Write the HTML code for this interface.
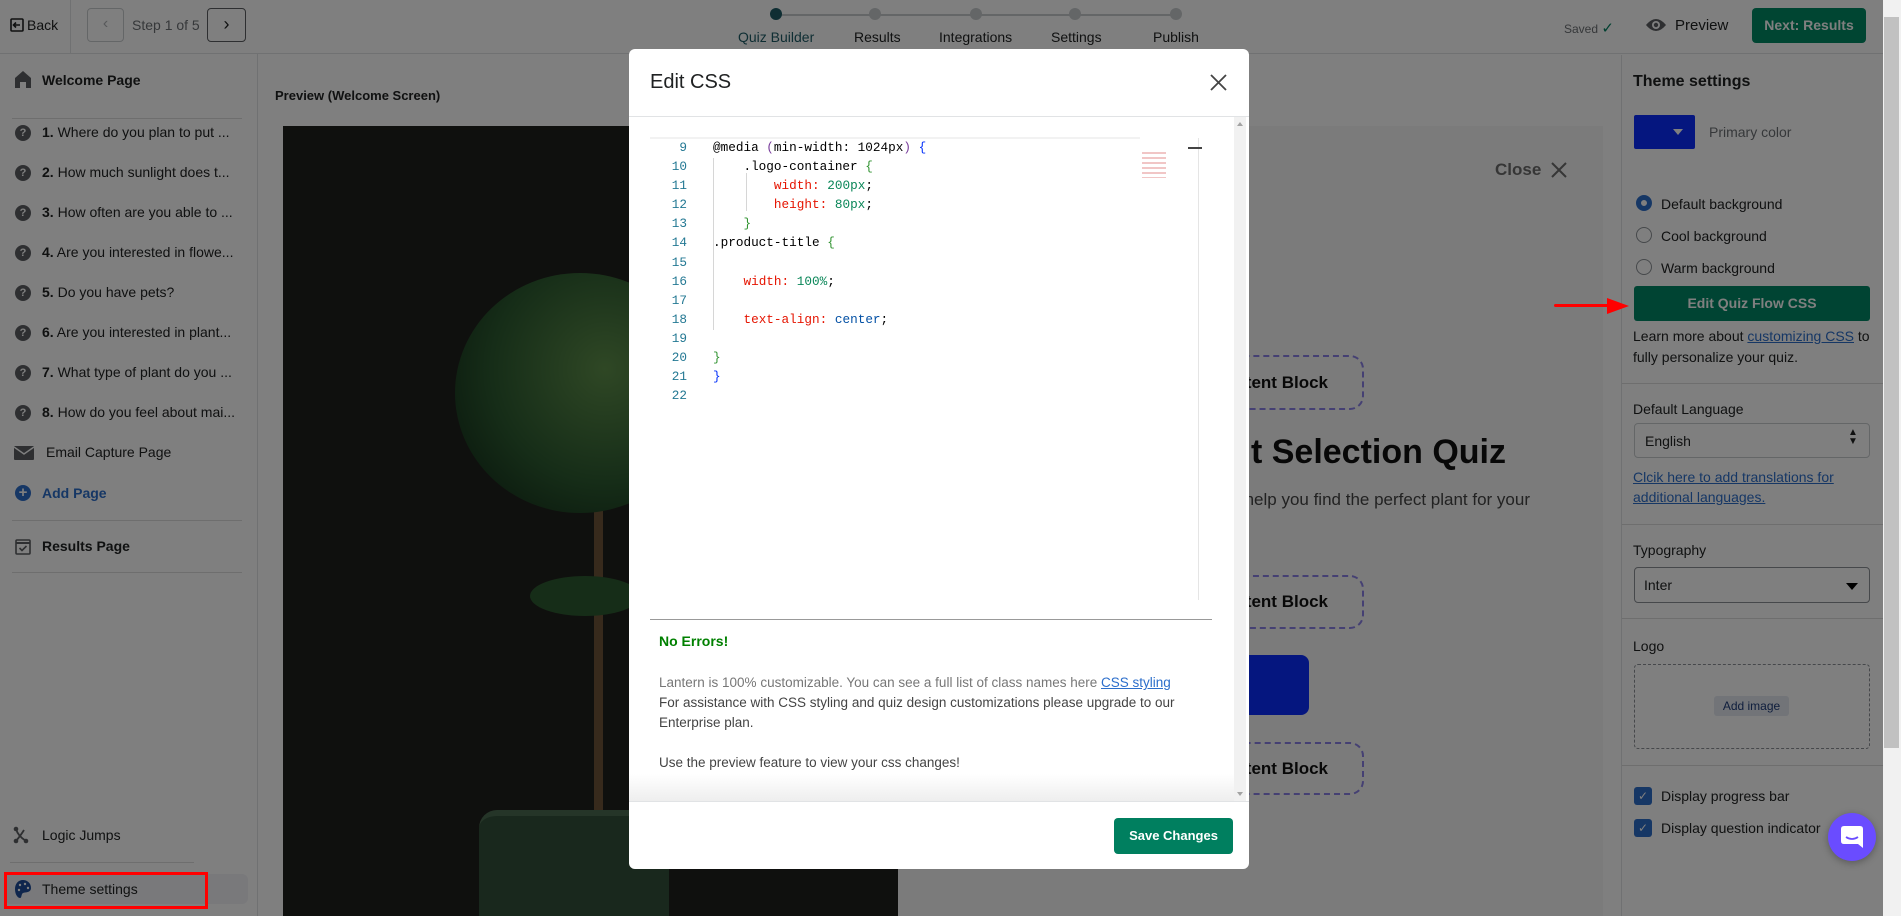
<!DOCTYPE html>
<html><head><meta charset="utf-8"><style>
*{box-sizing:border-box;margin:0;padding:0}
body{width:1901px;height:916px;overflow:hidden;position:relative;font-family:"Liberation Sans",sans-serif;background:#fff;color:#202223}
.a{position:absolute}
.t{position:absolute;white-space:nowrap}
.side .t{font-size:14px;color:#202223}
.qi{position:absolute;left:15px;width:16px;height:16px;border-radius:50%;background:#5c5f62;color:#fff;font-size:11px;font-weight:bold;text-align:center;line-height:16px}
.hr{position:absolute;height:1px;background:#dcdcdc}
.code{font-family:"Liberation Mono",monospace;font-size:12.7px;position:absolute;white-space:pre;line-height:19.1px}
.ln{color:#237893;text-align:right;width:40px}
.p{color:#e51400}.n{color:#098658}.b{color:#0431fa}.k{color:#0451a5}
.cb{position:absolute;border:2px dashed #8a80e6;border-radius:14px;font-weight:bold;font-size:17px;color:#111;text-align:right;padding-right:34px}
.rad{position:absolute;left:1636px;width:16px;height:16px;border-radius:50%;border:1.5px solid #8c9196;background:#fff}
.rp .t{font-size:14px;color:#202223}
.chk{position:absolute;left:1634px;width:18px;height:18px;border-radius:3px;background:#2c6ecb;color:#fff;font-size:12px;text-align:center;line-height:18px}
</style></head><body>
<!-- header -->
<div class="a" style="left:0;top:0;width:1901px;height:54px;background:#fff;border-bottom:1px solid #e1e3e5"></div>
<svg class="a" style="left:10px;top:18px" width="14" height="14" viewBox="0 0 14 14"><rect x="1" y="1" width="12" height="12" rx="1" fill="none" stroke="#202223" stroke-width="1.6"/><path d="M10 7H4M6 4.5 3.5 7 6 9.5" stroke="#202223" stroke-width="1.6" fill="none"/></svg>
<div class="t" style="left:27px;top:17px;font-size:14px">Back</div>
<div class="a" style="left:70px;top:0;width:1px;height:54px;background:#e1e3e5"></div>
<div class="a" style="left:87px;top:8px;width:37px;height:34px;border:1px solid #c9cccf;border-radius:4px;color:#b0b3b6;text-align:center;line-height:30px;font-size:16px">&#x2039;</div>
<div class="t" style="left:132px;top:17px;font-size:14px;color:#6d7175">Step 1 of 5</div>
<div class="a" style="left:207px;top:8px;width:39px;height:34px;border:1px solid #5c5f62;border-radius:4px;color:#202223;text-align:center;line-height:30px;font-size:18px">&#x203A;</div>
<div class="a" style="left:776px;top:14px;width:400px;height:2px;background:#c9cccf"></div>
<div class="a" style="left:770px;top:8px;width:12px;height:12px;border-radius:50%;background:#1e5c67"></div>
<div class="a" style="left:869px;top:8px;width:12px;height:12px;border-radius:50%;background:#c9cccf"></div>
<div class="a" style="left:970px;top:8px;width:12px;height:12px;border-radius:50%;background:#c9cccf"></div>
<div class="a" style="left:1069px;top:8px;width:12px;height:12px;border-radius:50%;background:#c9cccf"></div>
<div class="a" style="left:1170px;top:8px;width:12px;height:12px;border-radius:50%;background:#c9cccf"></div>
<div class="t" style="left:738px;top:29px;font-size:14px;color:#1e5c67">Quiz Builder</div>
<div class="t" style="left:854px;top:29px;font-size:14px">Results</div>
<div class="t" style="left:939px;top:29px;font-size:14px">Integrations</div>
<div class="t" style="left:1051px;top:29px;font-size:14px">Settings</div>
<div class="t" style="left:1153px;top:29px;font-size:14px">Publish</div>
<div class="t" style="left:1564px;top:19px;font-size:12px;color:#6d7175">Saved <span style="color:#008060;font-size:15px">&#10003;</span></div>
<svg class="a" style="left:1645px;top:17px" width="22" height="16" viewBox="0 0 22 16"><path d="M1 8Q11 -4 21 8Q11 20 1 8Z" fill="#5c5f62"/><circle cx="11" cy="8" r="4" fill="#fff"/><circle cx="11" cy="8" r="2.2" fill="#5c5f62"/></svg>
<div class="t" style="left:1675px;top:17px;font-size:15px">Preview</div>
<div class="a" style="left:1752px;top:8px;width:114px;height:35px;background:#008a64;border-radius:4px;color:#fff;font-weight:bold;font-size:14px;text-align:center;line-height:35px">Next: Results</div>

<!-- sidebar -->
<div class="side">
<div class="a" style="left:257px;top:54px;width:1px;height:862px;background:#e1e3e5"></div>
<svg class="a" style="left:15px;top:71px" width="16" height="17" viewBox="0 0 16 17"><path d="M8 0 16 7V17H11V11H5V17H0V7Z" fill="#5c5f62"/></svg>
<div class="t" style="left:42px;top:72px;font-weight:bold">Welcome Page</div>
<div class="hr" style="left:12px;top:118px;width:230px"></div>
<div class="qi" style="top:125px">?</div><div class="t" style="left:42px;top:124px"><b>1.</b> Where do you plan to put ...</div>
<div class="qi" style="top:165px">?</div><div class="t" style="left:42px;top:164px"><b>2.</b> How much sunlight does t...</div>
<div class="qi" style="top:205px">?</div><div class="t" style="left:42px;top:204px"><b>3.</b> How often are you able to ...</div>
<div class="qi" style="top:245px">?</div><div class="t" style="left:42px;top:244px"><b>4.</b> Are you interested in flowe...</div>
<div class="qi" style="top:285px">?</div><div class="t" style="left:42px;top:284px"><b>5.</b> Do you have pets?</div>
<div class="qi" style="top:325px">?</div><div class="t" style="left:42px;top:324px"><b>6.</b> Are you interested in plant...</div>
<div class="qi" style="top:365px">?</div><div class="t" style="left:42px;top:364px"><b>7.</b> What type of plant do you ...</div>
<div class="qi" style="top:405px">?</div><div class="t" style="left:42px;top:404px"><b>8.</b> How do you feel about mai...</div>
<svg class="a" style="left:14px;top:446px" width="20" height="14" viewBox="0 0 20 14"><rect width="20" height="14" rx="1" fill="#5c5f62"/><path d="M0 1 10 8 20 1" stroke="#fff" stroke-width="1.5" fill="none"/></svg>
<div class="t" style="left:46px;top:444px">Email Capture Page</div>
<div class="a" style="left:15px;top:485px;width:16px;height:16px;border-radius:50%;background:#2c6ecb;color:#fff;font-weight:bold;font-size:15px;text-align:center;line-height:16px">+</div>
<div class="t" style="left:42px;top:485px;font-weight:bold"><span style="color:#2c6ecb">Add Page</span></div>
<div class="hr" style="left:12px;top:520px;width:230px"></div>
<svg class="a" style="left:15px;top:538px" width="16" height="17" viewBox="0 0 16 17"><rect x="1" y="2" width="14" height="14" rx="1" fill="none" stroke="#5c5f62" stroke-width="1.6"/><path d="M1 5H15" stroke="#5c5f62" stroke-width="2"/><path d="M4.5 10 7 12.5 11.5 8" stroke="#5c5f62" stroke-width="1.6" fill="none"/></svg>
<div class="t" style="left:42px;top:538px;font-weight:bold">Results Page</div>
<div class="hr" style="left:12px;top:572px;width:230px"></div>
<svg class="a" style="left:13px;top:826px" width="16" height="18" viewBox="0 0 16 18"><circle cx="3" cy="3" r="2.3" fill="#5c5f62"/><circle cx="3" cy="15" r="2.3" fill="#5c5f62"/><circle cx="13" cy="15" r="2.3" fill="#5c5f62"/><path d="M3 3Q5 10 13 15M11 4Q8 9 3 15" stroke="#5c5f62" stroke-width="1.8" fill="none"/></svg>
<div class="t" style="left:42px;top:827px">Logic Jumps</div>
<div class="hr" style="left:10px;top:862px;width:184px"></div>
<div class="a" style="left:5px;top:874px;width:243px;height:30px;background:#f2f3f6;border-radius:6px"></div>
<svg class="a" style="left:15px;top:880px" width="16" height="18" viewBox="0 0 16 18"><path d="M8 0C3 0 0 4 0 9C0 15 3 18 5 18C7 18 6 14 8 13C10 12 16 13 16 8C16 3 12 0 8 0Z" fill="#1e4d9a"/><circle cx="5" cy="5" r="1.2" fill="#fff"/><circle cx="10" cy="4" r="1.2" fill="#fff"/><circle cx="13" cy="8" r="1.2" fill="#fff"/><circle cx="4" cy="10" r="1.2" fill="#fff"/></svg>
<div class="t" style="left:42px;top:881px">Theme settings</div>
</div>

<!-- preview area -->
<div class="a" style="left:258px;top:55px;width:1364px;height:861px;background:#fff"></div>
<div class="t" style="left:275px;top:88px;font-size:13px;font-weight:bold">Preview (Welcome Screen)</div>
<div class="a" style="left:283px;top:126px;width:1320px;height:790px;background:#f6f6f6"></div>
<div class="a" style="left:283px;top:126px;width:615px;height:790px;background:#1f201c;overflow:hidden">
  <div class="a" style="left:311px;top:370px;width:9px;height:420px;background:#6e5438"></div>
  <div class="a" style="left:172px;top:147px;width:250px;height:240px;border-radius:50%;background:radial-gradient(circle at 60% 40%,#5e8f4a,#2c5a30 55%,#1a3a20 80%)"></div>
  <div class="a" style="left:247px;top:450px;width:110px;height:40px;border-radius:50%;background:#2d5a30"></div>
  <div class="a" style="left:196px;top:684px;width:190px;height:130px;border-radius:18px 18px 0 0;background:#33503a;border-top:6px solid #4b6b50"></div>
</div>
<div class="t" style="left:1495px;top:160px;font-size:17px;font-weight:bold;color:#6d6d6d">Close</div>
<svg class="a" style="left:1550px;top:161px" width="18" height="18" viewBox="0 0 18 18"><path d="M2 2 16 16M16 2 2 16" stroke="#6d6d6d" stroke-width="2"/></svg>
<div class="cb" style="left:1120px;top:355px;width:244px;height:55px;line-height:51px">Content Block</div>
<div class="t" style="left:1100px;top:433px;width:406px;text-align:right;font-size:34px;font-weight:bold;color:#111">Plant Selection Quiz</div>
<div class="t" style="left:1100px;top:490px;width:430px;text-align:right;font-size:17px;color:#444">We'll help you find the perfect plant for your</div>
<div class="cb" style="left:1120px;top:575px;width:244px;height:54px;line-height:50px">Content Block</div>
<div class="a" style="left:1150px;top:655px;width:159px;height:60px;background:#0a2cff;border-radius:8px"></div>
<div class="cb" style="left:1120px;top:742px;width:244px;height:53px;line-height:49px">Content Block</div>

<!-- right panel -->
<div class="rp">
<div class="a" style="left:1621px;top:55px;width:1px;height:861px;background:#e1e3e5"></div>
<div class="t" style="left:1633px;top:73px;font-size:16px;font-weight:bold">Theme settings</div>
<div class="a" style="left:1634px;top:115px;width:61px;height:34px;background:#0a2cff;border-radius:2px"></div>
<div class="a" style="left:1673px;top:129px;border-left:5px solid transparent;border-right:5px solid transparent;border-top:6px solid #fff"></div>
<div class="t" style="left:1709px;top:124px;color:#6d7175">Primary color</div>
<div class="rad" style="top:195px;border:5px solid #2c6ecb;background:#fff"></div>
<div class="t" style="left:1661px;top:196px">Default background</div>
<div class="rad" style="top:227px"></div><div class="t" style="left:1661px;top:228px">Cool background</div>
<div class="rad" style="top:259px"></div><div class="t" style="left:1661px;top:260px">Warm background</div>
<div class="a" style="left:1634px;top:286px;width:236px;height:35px;background:#008866;border-radius:3px;color:#fff;font-weight:bold;font-size:14px;text-align:center;line-height:35px">Edit Quiz Flow CSS</div>
<div class="t" style="left:1633px;top:328px">Learn more about <u style="color:#2c6ecb">customizing CSS</u> to</div>
<div class="t" style="left:1633px;top:349px">fully personalize your quiz.</div>
<div class="hr" style="left:1622px;top:383px;width:261px"></div>
<div class="t" style="left:1633px;top:401px">Default Language</div>
<div class="a" style="left:1634px;top:423px;width:236px;height:35px;border:1px solid #c9cccf;border-radius:4px;background:#fff"></div>
<div class="t" style="left:1645px;top:433px">English</div>
<div class="t" style="left:1848px;top:428px;font-size:10px;line-height:9px">&#9650;<br>&#9660;</div>
<div class="t" style="left:1633px;top:469px"><u style="color:#2c6ecb">Clcik here to add translations for</u></div>
<div class="t" style="left:1633px;top:489px"><u style="color:#2c6ecb">additional languages.</u></div>
<div class="hr" style="left:1622px;top:524px;width:261px"></div>
<div class="t" style="left:1633px;top:542px">Typography</div>
<div class="a" style="left:1634px;top:567px;width:236px;height:36px;border:1px solid #8c9196;border-radius:4px;background:#fff"></div>
<div class="t" style="left:1644px;top:577px">Inter</div>
<div class="a" style="left:1846px;top:583px;border-left:6px solid transparent;border-right:6px solid transparent;border-top:7px solid #000"></div>
<div class="hr" style="left:1622px;top:618px;width:261px"></div>
<div class="t" style="left:1633px;top:638px">Logo</div>
<div class="a" style="left:1634px;top:664px;width:236px;height:85px;border:1px dashed #8c9196;border-radius:4px"></div>
<div class="a" style="left:1714px;top:696px;width:75px;height:20px;background:#e4e8f0;border-radius:3px;color:#1f3d7a;font-size:12px;text-align:center;line-height:20px">Add image</div>
<div class="hr" style="left:1622px;top:765px;width:261px"></div>
<div class="chk" style="top:787px">&#10003;</div><div class="t" style="left:1661px;top:788px">Display progress bar</div>
<div class="chk" style="top:819px">&#10003;</div><div class="t" style="left:1661px;top:820px">Display question indicator</div>
</div>

<!-- overlay -->
<div class="a" style="left:0;top:0;width:1901px;height:916px;background:rgba(0,0,0,0.5)"></div>

<!-- page scrollbar -->
<div class="a" style="left:1883px;top:0;width:18px;height:916px;background:#f1f1f1"></div>
<div class="a" style="left:1884px;top:17px;width:15px;height:731px;background:#c1c1c1"></div>

<!-- annotations -->
<div class="a" style="left:4px;top:872px;width:204px;height:37px;border:3px solid #ff0000"></div>
<div class="a" style="left:1554px;top:304px;width:55px;height:3px;background:#ff0000;border-radius:2px"></div>
<div class="a" style="left:1607px;top:298px;border-top:8px solid transparent;border-bottom:8px solid transparent;border-left:22px solid #ff0000"></div>

<!-- chat bubble -->
<div class="a" style="left:1828px;top:813px;width:48px;height:48px;border-radius:50%;background:#6a4cff;box-shadow:0 2px 8px rgba(0,0,0,.3)"></div>
<svg class="a" style="left:1841px;top:826px" width="22" height="22" viewBox="0 0 22 22"><path d="M3 0H19Q22 0 22 3V22L17 18H3Q0 18 0 15V3Q0 0 3 0Z" fill="#fff"/><path d="M5 11Q11 15 17 11" stroke="#6a4cff" stroke-width="1.8" fill="none"/></svg>

<!-- modal -->
<div class="a" style="left:629px;top:49px;width:620px;height:820px;background:#fff;border-radius:6px;overflow:hidden">
  <div class="t" style="left:21px;top:22px;font-size:20px;color:#202223">Edit CSS</div>
  <svg class="a" style="left:581px;top:25px" width="17" height="17" viewBox="0 0 17 17"><path d="M1 1 16 16M16 1 1 16" stroke="#444" stroke-width="1.8"/></svg>
  <div class="a" style="left:0;top:67px;width:620px;height:1px;background:#e1e3e5"></div>
  <div class="a" style="left:605px;top:68px;width:12px;height:684px;background:#f1f1f1"></div>
  <div class="a" style="left:608px;top:73px;border-left:3px solid transparent;border-right:3px solid transparent;border-bottom:4px solid #a3a3a3"></div>
  <div class="a" style="left:608px;top:743px;border-left:3px solid transparent;border-right:3px solid transparent;border-top:4px solid #a3a3a3"></div>
  <div class="a" style="left:21px;top:88px;width:490px;height:2px;background:#f2f2f2"></div>
  <div class="a" style="left:569px;top:89px;width:1px;height:462px;background:#e5e5e5"></div>
  <div class="a" style="left:559px;top:98px;width:14px;height:2px;background:#444"></div>
  <div class="a" style="left:513px;top:103px;width:24px;height:26px;background:repeating-linear-gradient(#e8a0a0 0 2px,transparent 2px 5px);opacity:.6"></div>
  <div class="a" style="left:84px;top:109px;width:1px;height:76px;background:#d6d6d6"></div>
  <div class="a" style="left:117px;top:124px;width:1px;height:38px;background:#d6d6d6"></div>
  <div class="a" style="left:84px;top:166px;width:1px;height:115px;background:#d6d6d6"></div>
  <div class="code ln" style="left:18px;top:89px">9
10
11
12
13
14
15
16
17
18
19
20
21
22</div>
  <div class="code" style="left:84px;top:89px;color:#000">@media <span style="color:#7a3e9d">(</span>min-width: 1024px<span style="color:#7a3e9d">)</span> <span class="b">{</span>
    .logo-container <span style="color:#319331">{</span>
        <span class="p">width:</span> <span class="n">200px</span>;
        <span class="p">height:</span> <span class="n">80px</span>;
    <span style="color:#319331">}</span>
.product-title <span style="color:#319331">{</span>

    <span class="p">width:</span> <span class="n">100%</span>;

    <span class="p">text-align:</span> <span class="k">center</span>;

<span style="color:#319331">}</span>
<span class="b">}</span>
</div>
  <div class="a" style="left:21px;top:570px;width:562px;height:1px;background:#999"></div>
  <div class="t" style="left:30px;top:584px;font-size:14px;font-weight:bold;color:#008000">No Errors!</div>
  <div class="t" style="left:30px;top:624px;font-size:13.5px;color:#777;line-height:20px">Lantern is 100% customizable. You can see a full list of class names here <u style="color:#2c6ecb">CSS styling</u></div>
  <div class="t" style="left:30px;top:644px;font-size:13.5px;color:#444;line-height:20px">For assistance with CSS styling and quiz design customizations please upgrade to our<br>Enterprise plan.<br><br>Use the preview feature to view your css changes!</div>
  <div class="a" style="left:0;top:725px;width:605px;height:27px;background:linear-gradient(rgba(255,255,255,0),#eee)"></div>
  <div class="a" style="left:0;top:752px;width:620px;height:1px;background:#e1e3e5"></div>
  <div class="a" style="left:485px;top:769px;width:119px;height:36px;background:#007f5f;border-radius:4px;color:#fff;font-weight:bold;font-size:13px;text-align:center;line-height:36px;white-space:nowrap">Save Changes</div>
</div>
</body></html>
